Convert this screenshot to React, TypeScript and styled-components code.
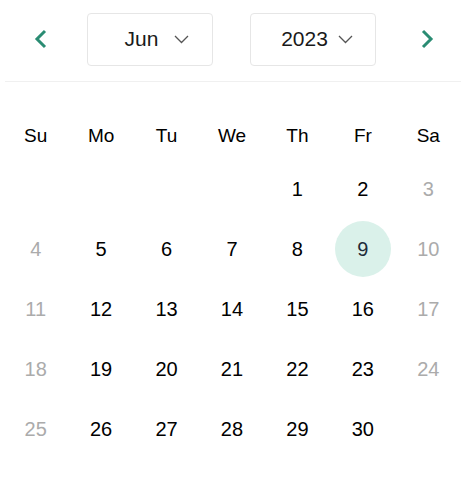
import React from "react";
import styled, { createGlobalStyle } from "styled-components";

const GlobalStyle = createGlobalStyle`
  body {
    margin: 0;
    background: #fff;
    font-family: "Liberation Sans", Arial, sans-serif;
  }
`;

const Wrapper = styled.div`
  width: 466px;
  box-sizing: border-box;
  padding: 0 5px 0 3px;
`;

const Header = styled.div`
  display: flex;
  align-items: center;
  height: 82px;
  box-sizing: border-box;
  padding: 13px 0 16px 24px;
  margin: 0 0 0 2px;
  border-bottom: 1px solid #f0f0f0;
`;

const NavButton = styled.button<{ $offset?: number }>`
  width: 24px;
  height: 24px;
  padding: 0;
  border: none;
  background: none;
  display: flex;
  align-items: center;
  justify-content: center;
  margin-left: ${(p) => p.$offset ?? 0}px;
  cursor: pointer;
`;

const SelectBox = styled.div<{ $offset: number; $gap: number; $shift: number }>`
  width: 126px;
  height: 53px;
  box-sizing: border-box;
  border: 1px solid #e6e6e6;
  border-radius: 4px;
  margin-left: ${(p) => p.$offset}px;
  display: flex;
  align-items: center;
  justify-content: center;
  gap: ${(p) => p.$gap}px;
  padding-left: ${(p) => p.$shift}px;
  font-size: 21px;
  color: #1a1a1a;
`;

const Grid = styled.div`
  display: grid;
  grid-template-columns: repeat(7, 1fr);
  padding-top: 31px;
`;

const WeekDay = styled.div`
  height: 46px;
  display: flex;
  align-items: center;
  justify-content: center;
  font-size: 19px;
  color: #000;
`;

const DayCell = styled.div`
  height: 60px;
  display: flex;
  align-items: center;
  justify-content: center;
`;

const DayNumber = styled.div<{ $muted?: boolean; $selected?: boolean }>`
  width: 56px;
  height: 56px;
  border-radius: 50%;
  display: flex;
  align-items: center;
  justify-content: center;
  font-size: 20px;
  color: ${(p) => (p.$selected ? "#1e2b3a" : p.$muted ? "#ababab" : "#000")};
  background: ${(p) => (p.$selected ? "#daf1ea" : "transparent")};
`;

const Chevron = ({ dir }: { dir: "left" | "right" }) => (
  <svg width="14" height="20" viewBox="0 0 14 20">
    <polyline
      points={dir === "left" ? "11,2 3,10 11,18" : "3,2 11,10 3,18"}
      fill="none"
      stroke="#2a8c73"
      strokeWidth="3"
    />
  </svg>
);

const Caret = () => (
  <svg width="15" height="9" viewBox="0 0 15 9">
    <polyline points="1,1 7.5,7.5 14,1" fill="none" stroke="#555" strokeWidth="1.3" />
  </svg>
);

const weekDays = ["Su", "Mo", "Tu", "We", "Th", "Fr", "Sa"];

const App: React.FC = () => {
  const cells: (number | null)[] = [null, null, null, null];
  for (let d = 1; d <= 30; d++) cells.push(d);

  return (
    <Wrapper>
      <GlobalStyle />
      <Header>
        <NavButton>
          <Chevron dir="left" />
        </NavButton>
        <SelectBox $offset={34} $gap={16} $shift={14}>
          <span>Jun</span>
          <Caret />
        </SelectBox>
        <SelectBox $offset={37} $gap={10} $shift={8}>
          <span>2023</span>
          <Caret />
        </SelectBox>
        <NavButton $offset={39}>
          <Chevron dir="right" />
        </NavButton>
      </Header>
      <Grid>
        {weekDays.map((w) => (
          <WeekDay key={w}>{w}</WeekDay>
        ))}
        {cells.map((d, i) => {
          const col = i % 7;
          return (
            <DayCell key={i}>
              {d !== null && (
                <DayNumber $muted={col === 0 || col === 6} $selected={d === 9}>
                  {d}
                </DayNumber>
              )}
            </DayCell>
          );
        })}
      </Grid>
    </Wrapper>
  );
};

export default App;
